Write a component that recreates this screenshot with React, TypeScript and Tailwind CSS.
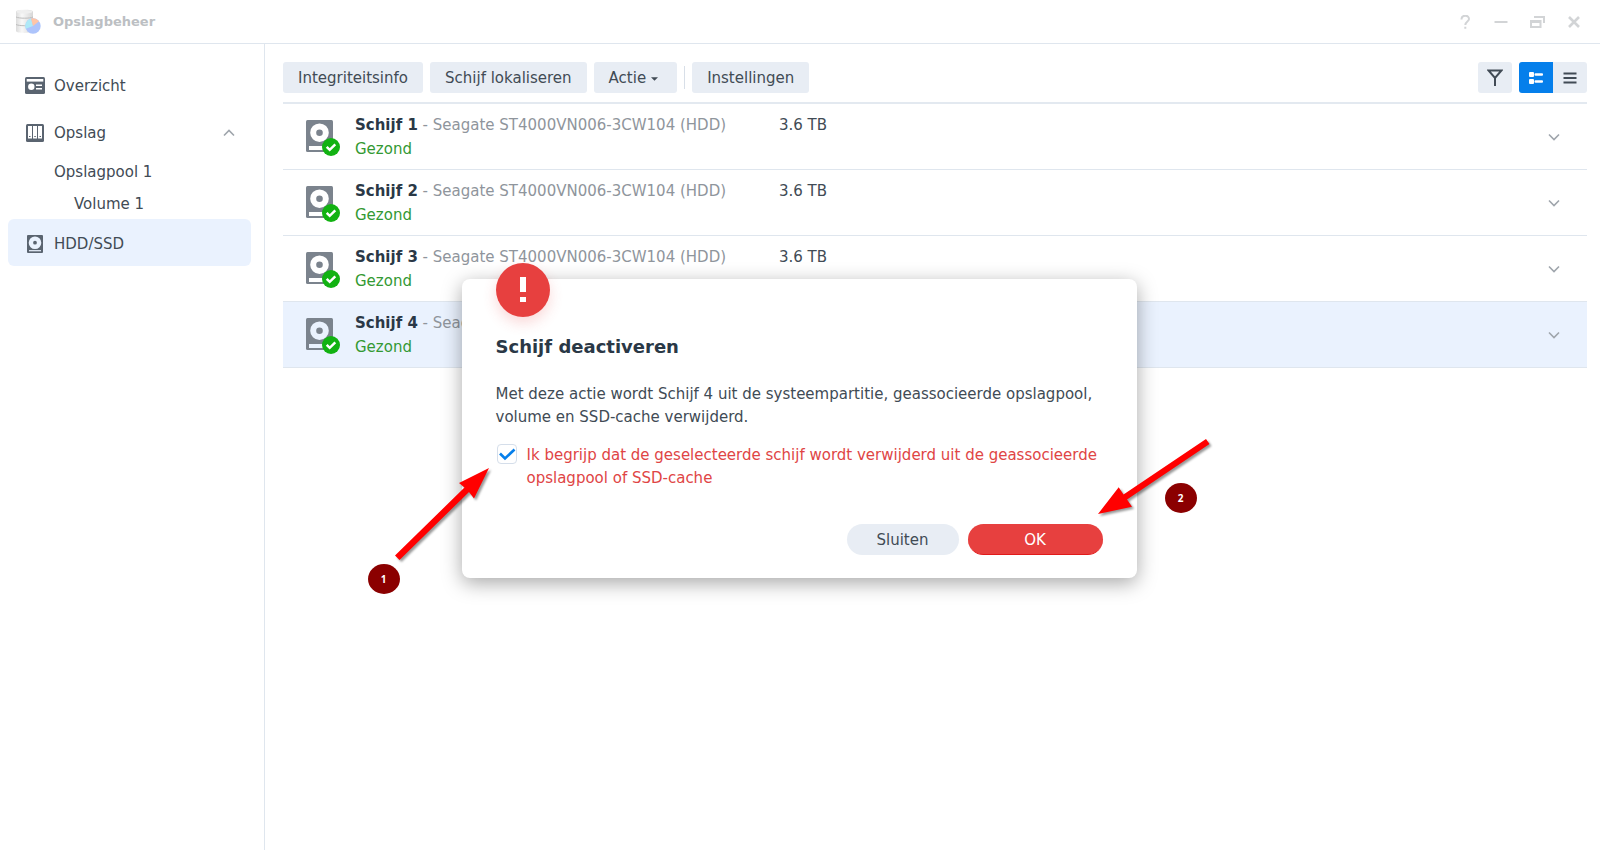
import React, { useState } from 'react';

interface Drive {
  id: number;
  name: string;
  model: string;
  size: string;
  status: string;
}

const DRIVES: Drive[] = [1, 2, 3, 4].map((n) => ({
  id: n,
  name: `Schijf ${n}`,
  model: 'Seagate ST4000VN006-3CW104 (HDD)',
  size: '3.6 TB',
  status: 'Gezond',
}));

const AppLogo = () => (
  <svg className="w-[26px] h-[26px]" viewBox="0 0 26 26" fill="none">
    <defs>
      <linearGradient id="cyl" x1="0" x2="1" y1="0" y2="0">
        <stop offset="0" stopColor="#dcdcdc" />
        <stop offset="0.35" stopColor="#f8f8f8" />
        <stop offset="1" stopColor="#d6d6d6" />
      </linearGradient>
    </defs>
    <path d="M1 2.500c0-2.500 17-2.500 17 0v19.500c0 2.500-17 2.500-17 0z" fill="url(#cyl)" />
    <path d="M1 8c3 1.600 14 1.600 17 0M1 15.500c3 1.600 14 1.600 17 0" stroke="#bdbdbd" strokeWidth="1" />
    <ellipse cx="9.500" cy="2.800" rx="8" ry="1.800" fill="#efefef" />
    <circle cx="18" cy="17" r="7.700" fill="#adc4fb" />
    <path d="M18 17 10.800 19.800A7.700 7.700 0 0 1 16 9.600z" fill="#aee9f7" />
    <path d="M18 17 16 9.600A7.700 7.700 0 0 1 24 12.200z" fill="#ffc5a6" />
  </svg>
);

const OverviewIcon = () => (
  <svg className="w-5 h-[18px]" viewBox="0 0 20 18">
    <rect width="20" height="17" rx="1.500" fill="#5a6470" />
    <rect x="1.700" y="2" width="16.600" height="2.600" fill="#fff" />
    <circle cx="6.300" cy="9.800" r="3.200" fill="#fff" />
    <path d="M11 8.300h6M11 11.700h6" stroke="#fff" strokeWidth="1.400" />
  </svg>
);

const StorageIcon = () => (
  <svg className="w-5 h-[18px]" viewBox="0 0 20 18">
    <rect x="1" y="0" width="18" height="18" rx="1.500" fill="#5a6470" />
    <path d="M3 2h4v12.500H3zM8 2h4v12.500H8zM13 2h4v12.500h-4z" fill="#fff" />
    <path d="M4 12.500h1.500M9.300 12.500h1.500M14.500 12.500H16" stroke="#5a6470" strokeWidth="1" />
  </svg>
);

const SmallDriveIcon = () => (
  <svg className="w-5 h-[18px]" viewBox="0 0 20 18">
    <rect x="2" y="0" width="16" height="18" rx="1" fill="#5a6470" />
    <circle cx="10" cy="7.700" r="4.100" fill="none" stroke="#eaf2fe" strokeWidth="4.400" />
    <path d="M4 15.700h12" stroke="#eaf2fe" strokeWidth="1.200" />
  </svg>
);

const DriveIcon = ({ selected }: { selected: boolean }) => (
  <svg className={`w-[34px] h-9 mt-[3px] shrink-0 ${selected ? 'text-[#eaf2fe]' : 'text-white'}`} viewBox="0 0 34 36">
    <rect width="27" height="32" rx="1.500" fill="#7b838d" />
    <circle cx="13.500" cy="12.700" r="6.300" fill="none" stroke="currentColor" strokeWidth="6" />
    <rect x="3" y="26" width="15" height="4" fill="currentColor" />
    <circle cx="25" cy="27" r="9" fill="#12b212" />
    <path d="m20.700 26.800 3 3 5.600-5.400" fill="none" stroke="#fff" strokeWidth="2.500" />
  </svg>
);

const Chevron = ({ up = false }: { up?: boolean }) => (
  <svg className="w-3 h-2" viewBox="0 0 12 8" fill="none" stroke="#9fa5ac" strokeWidth="1.600">
    <path d={up ? 'm1 6.500 5-5 5 5' : 'm1 1.500 5 5 5-5'} />
  </svg>
);

const TitleBar = () => (
  <header className="h-11 shrink-0 flex items-center justify-between border-b border-[#dfe6ee] pl-[15px] pr-[19px]">
    <div className="flex items-center gap-3">
      <AppLogo />
      <h1 className="text-[13px] font-bold text-[#bcbfc3]">Opslagbeheer</h1>
    </div>
    <div className="flex items-center gap-[22px] text-[#d2d4d6]">
      <button aria-label="Help" className="w-[14px] h-[14px]">
        <svg viewBox="0 0 14 14" fill="none" stroke="currentColor" strokeWidth="2">
          <path d="M3.500 4.500C3.500-.500 11-.500 11 4c0 2.500-3.700 2.500-3.700 6M7.300 11.700v2" />
        </svg>
      </button>
      <button aria-label="Minimaliseren" className="w-[14px] h-[14px]">
        <svg viewBox="0 0 14 14" stroke="currentColor" strokeWidth="2">
          <path d="M.5 7h13" />
        </svg>
      </button>
      <button aria-label="Vorig formaat" className="w-[15px] h-[14px]">
        <svg viewBox="0 0 15 14" fill="none" stroke="currentColor" strokeWidth="2">
          <path d="M4 2h10v6" />
          <path d="M1 6h9.500v6H1z" />
          <path d="M1 6.500h9.500" strokeWidth="3" />
        </svg>
      </button>
      <button aria-label="Sluiten" className="w-[14px] h-[14px]">
        <svg viewBox="0 0 14 14" stroke="currentColor" strokeWidth="2.600">
          <path d="m2 2 10 10M12 2 2 12" />
        </svg>
      </button>
    </div>
  </header>
);

const Sidebar = () => (
  <nav className="w-[265px] shrink-0 border-r border-[#dfe6ee] pt-[17px] pl-2 pr-[13px] text-[15px]">
    <a href="#overzicht" className="h-[47px] flex items-center gap-[9px] pt-[3px] pl-[17px]">
      <OverviewIcon />
      Overzicht
    </a>
    <a href="#opslag" className="h-[47px] flex items-center gap-[9px] pt-[3px] pl-[17px] pr-4">
      <StorageIcon />
      <span className="flex-1">Opslag</span>
      <Chevron up />
    </a>
    <a href="#opslagpool" className="h-8 flex items-center pt-[3px] pl-[46px]">Opslagpool 1</a>
    <a href="#volume" className="h-8 flex items-center pt-[3px] pl-[66px]">Volume 1</a>
    <a href="#hdd" className="h-[47px] flex items-center gap-[9px] pt-[3px] pl-[17px] rounded-md bg-[#eaf2fe]">
      <SmallDriveIcon />
      HDD/SSD
    </a>
  </nav>
);

const Toolbar = () => {
  const button = 'h-[31px] px-[15px] pt-[2px] rounded-[3px] bg-[#e8edf4] flex items-center gap-[5px] whitespace-nowrap';

  return (
    <div className="flex items-center gap-[7px] pt-[18px] pb-[9px] border-b-2 border-[#e3e9f0] text-[15px]">
      <button className={button}>Integriteitsinfo</button>
      <button className={button}>Schijf lokaliseren</button>
      <button className={button}>
        Actie
        <svg className="w-[7px] h-1 mr-1" viewBox="0 0 8 4" fill="currentColor">
          <path d="M0 0h8L4 4z" />
        </svg>
      </button>
      <span className="w-px h-[23px] bg-[#d8dfe8]" />
      <button className={button}>Instellingen</button>

      <button aria-label="Filter" className="ml-auto w-[34px] h-[31px] rounded-[3px] bg-[#e8edf4] flex items-center justify-center">
        <svg className="w-4 h-[17px]" viewBox="0 0 16 17" fill="none" stroke="currentColor" strokeWidth="2">
          <path d="M1.500 1.500h13L8 9zM8 8.500V17" />
        </svg>
      </button>
      <div className="flex">
        <button aria-label="Detailweergave" className="w-[34px] h-[31px] rounded-l-[3px] bg-[#057feb] flex items-center justify-center">
          <svg className="w-[14px] h-3" viewBox="0 0 14 12" fill="#fff">
            <rect y="0" width="5" height="5" rx="1" />
            <rect y="7" width="5" height="5" rx="1" />
            <rect x="5.500" y="1.300" width="8.500" height="2.400" rx="1" />
            <rect x="5.500" y="8.300" width="8.500" height="2.400" rx="1" />
          </svg>
        </button>
        <button aria-label="Lijstweergave" className="w-[34px] h-[31px] rounded-r-[3px] bg-[#e8edf4] flex items-center justify-center">
          <svg className="w-[14px] h-3" viewBox="0 0 14 12" stroke="currentColor" strokeWidth="2">
            <path d="M.5 1.500h13M.5 6h13M.5 10.500h13" />
          </svg>
        </button>
      </div>
    </div>
  );
};

const DriveRow: React.FC<{ drive: Drive; selected: boolean; onSelect: () => void }> = ({ drive, selected, onSelect }) => (
  <li
    onClick={onSelect}
    className={`h-[66px] flex items-center pl-[23px] pr-[27px] border-b border-[#dfe6ee] text-[15px] ${selected ? 'bg-[#eaf2fe]' : ''}`}
  >
    <DriveIcon selected={selected} />
    <div className="ml-[15px] w-[424px] leading-6 whitespace-nowrap">
      <div className="text-[#8f959c]">
        <strong className="text-[#2a3846]">{drive.name}</strong> - {drive.model}
      </div>
      <div className="text-[#339933]">{drive.status}</div>
    </div>
    <div className="pb-6 leading-6">{drive.size}</div>
    <button aria-label={`${drive.name} uitvouwen`} className="ml-auto">
      <Chevron />
    </button>
  </li>
);

const Annotations = () => (
  <>
    <svg
      className="absolute -left-[112px] top-0 w-[900px] h-[340px] max-w-none pointer-events-none drop-shadow-[2px_2px_1px_rgba(0,0,0,0.4)]"
      viewBox="350 279 900 340"
      fill="#ff0000"
    >
      <path d="M489 468 459 483l5.500 4.500-69.500 68 4.500 4.500 69.500-68 5 6.500z" />
      <path d="m1098 514 20.700-26.700 4.800 7.200L1206 439l3.500 5-82.500 55.500 5 7.200z" />
    </svg>
    <span className="absolute -left-[94px] top-[285px] w-8 h-[30px] rounded-[50%] bg-[#8b0000] text-white text-[10px] font-bold flex items-center justify-center font-['Open_Sans',sans-serif]">
      1
    </span>
    <span className="absolute left-[703px] top-[204px] w-8 h-[30px] rounded-[50%] bg-[#8b0000] text-white text-[10px] font-bold flex items-center justify-center font-['Open_Sans',sans-serif]">
      2
    </span>
  </>
);

const DeactivateDialog = () => {
  const [confirmed, setConfirmed] = useState(true);

  return (
    <div className="absolute inset-0 pt-[7px] pr-[2px] flex items-center justify-center">
      <div
        role="dialog"
        aria-labelledby="dialog-title"
        className="relative w-[675px] bg-white rounded-lg px-[34px] pt-[54px] pb-[23px] text-[15px] leading-[23px] shadow-[0_5px_20px_rgba(0,0,0,0.35)]"
      >
        <div className="absolute left-[34px] -top-4 w-[54px] h-[54px] rounded-full bg-[#e7403f] flex items-center justify-center shadow-[0_6px_14px_rgba(231,64,63,0.2)]">
          <svg className="w-[6px] h-[26px]" viewBox="0 0 6 26" fill="#fff">
            <path d="M0 0h6v15H0zM0 20h6v5H0z" />
          </svg>
        </div>
        <h2 id="dialog-title" className="text-[18px] leading-7 font-bold text-[#2a3846]">Schijf deactiveren</h2>
        <p className="mt-[22px]">
          Met deze actie wordt Schijf 4 uit de systeempartitie, geassocieerde opslagpool, volume en SSD-cache verwijderd.
        </p>
        <label className="mt-[15px] flex items-start gap-[10px] text-[#e04545]">
          <span className="relative ml-px w-5 h-5 shrink-0">
            <input
              type="checkbox"
              checked={confirmed}
              onChange={(e) => setConfirmed(e.target.checked)}
              className="block appearance-none w-5 h-5 rounded border border-[#d5deea] bg-white"
            />
            {confirmed && (
              <svg className="absolute inset-0 pointer-events-none" viewBox="0 0 20 20" fill="none" stroke="#057feb" strokeWidth="2.600">
                <path d="m3 9.500 5 5 9.500-9" />
              </svg>
            )}
          </span>
          <span>Ik begrijp dat de geselecteerde schijf wordt verwijderd uit de geassocieerde opslagpool of SSD-cache</span>
        </label>
        <div className="mt-[34px] flex justify-end gap-[9px]">
          <button className="w-[112px] h-[31px] pt-[2px] rounded-full bg-[#e8edf4]">Sluiten</button>
          <button className="w-[135px] h-[31px] pt-[2px] rounded-full bg-[#e7403f] text-white border-b border-[#e11a1a]">OK</button>
        </div>
        <Annotations />
      </div>
    </div>
  );
};

const App = () => {
  const [selected, setSelected] = useState(4);

  return (
    <div className="relative min-h-screen flex flex-col bg-white text-[#414b55] font-['DejaVu_Sans',sans-serif]">
      <TitleBar />
      <div className="flex-1 flex">
        <Sidebar />
        <main className="flex-1 min-w-0 pl-[18px] pr-[13px]">
          <Toolbar />
          <ul>
            {DRIVES.map((drive) => (
              <DriveRow key={drive.id} drive={drive} selected={drive.id === selected} onSelect={() => setSelected(drive.id)} />
            ))}
          </ul>
        </main>
      </div>
      <DeactivateDialog />
    </div>
  );
};

export default App;
